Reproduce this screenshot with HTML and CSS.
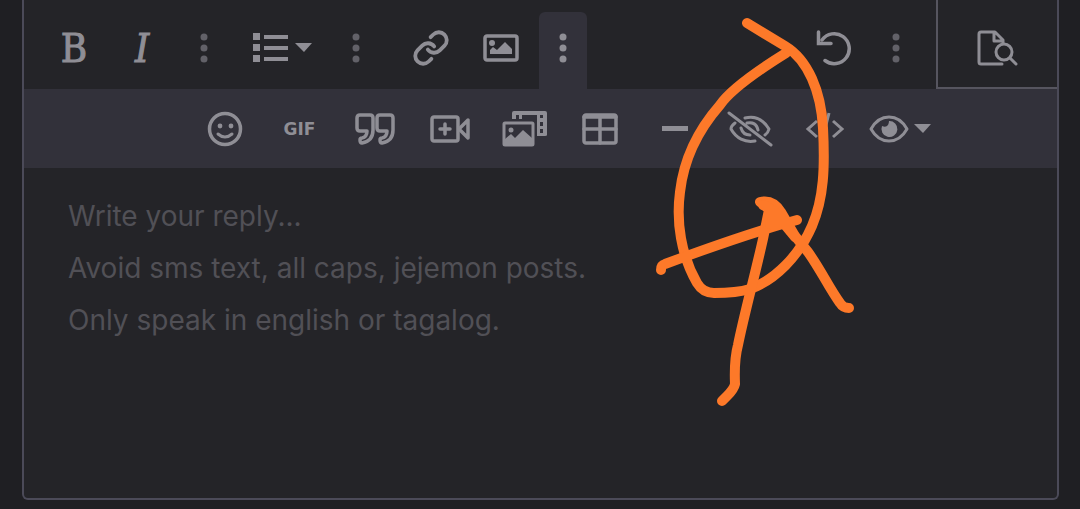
FILE: index.html
```html
<!DOCTYPE html>
<html lang="en">

<head>
    <meta charset="UTF-8">
    <meta name="viewport" content="width=device-width, initial-scale=1.0">
    <title>Write your reply</title>
    <link rel="stylesheet" href="styles.css">
</head>

<body>
    <form class="editor">
        <div class="editor-top">
            <div class="toolbar">
                <button type="button" class="letter" aria-label="Bold">B</button>
                <button type="button" class="letter italic" aria-label="Italic">I</button>
                <button type="button" class="more dim" aria-label="More text options">
                    <svg width="8" height="30"><circle cx="4" cy="4" r="3.5"/><circle cx="4" cy="15" r="3.5"/><circle cx="4" cy="26" r="3.5"/></svg>
                </button>
                <button type="button" class="list" aria-label="List">
                    <svg width="60" height="30" viewBox="0 0 60 30">
                        <path d="M1 0h7v7H1zM1 11h7v7H1zM1 22h7v7H1zM12 2h24v4H12zM12 13h24v4H12zM12 24h24v4H12zM43 10h17l-8 9z"/>
                    </svg>
                </button>
                <button type="button" class="more paragraph dim" aria-label="More paragraph options">
                    <svg width="8" height="30"><circle cx="4" cy="4" r="3.5"/><circle cx="4" cy="15" r="3.5"/><circle cx="4" cy="26" r="3.5"/></svg>
                </button>
                <button type="button" class="insert" aria-label="Insert link">
                    <svg class="line" width="38" height="38" viewBox="0 0 24 24" stroke-width="2.4">
                        <path d="M10 13a5 5 0 0 0 7.54.54l3-3a5 5 0 0 0-7.07-7.07l-1.72 1.71M14 11a5 5 0 0 0-7.54-.54l-3 3a5 5 0 0 0 7.07 7.07l1.71-1.71"/>
                    </svg>
                </button>
                <button type="button" class="insert" aria-label="Insert image">
                    <svg width="36" height="28" viewBox="0 0 36 28">
                        <rect class="line" x="2" y="2" width="32" height="24" rx="2" stroke-width="3.5"/>
                        <circle cx="9" cy="9" r="3"/>
                        <path d="M7 20v-4l3-3 4 3 8-8 7 7v5z"/>
                    </svg>
                </button>
                <button type="button" class="tab" aria-label="More options" aria-expanded="true">
                    <svg width="8" height="30"><circle cx="4" cy="4" r="3.5"/><circle cx="4" cy="15" r="3.5"/><circle cx="4" cy="26" r="3.5"/></svg>
                </button>
                <button type="button" class="undo" aria-label="Undo">
                    <svg class="line" width="36" height="36" viewBox="0 0 36 36" stroke-width="3.5">
                        <path d="M9 30.500A15 15 0 1 0 6 10"/>
                        <path d="M2.500 2v11.500H15" stroke-linejoin="miter"/>
                    </svg>
                </button>
                <button type="button" class="more dim" aria-label="More">
                    <svg width="8" height="30"><circle cx="4" cy="4" r="3.5"/><circle cx="4" cy="15" r="3.5"/><circle cx="4" cy="26" r="3.5"/></svg>
                </button>
            </div>
            <button type="button" class="preview" aria-label="Preview">
                <svg class="line" width="42" height="36" viewBox="0 0 42 36">
                    <path d="M25 34H4q-2 0-2-2V4q0-2 2-2h14l8 8v3M17 2v9h9"/>
                    <circle cx="27" cy="22" r="8"/>
                    <path d="M33 28l6 6"/>
                </svg>
            </button>
        </div>
        <div class="toolbar-more">
            <button type="button" aria-label="Smilies">
                <svg width="36" height="36" viewBox="0 0 36 36">
                    <circle class="line" cx="18" cy="18" r="15.5" stroke-width="3.5"/>
                    <circle cx="13" cy="15" r="2.4"/><circle cx="24" cy="15" r="2.4"/>
                    <path class="line" d="M11 23q7 6 14 0"/>
                </svg>
            </button>
            <button type="button" class="gif">GIF</button>
            <button type="button" aria-label="Quote">
                <svg class="line" width="40" height="34" viewBox="0 0 40 34" stroke-width="3.5">
                    <path d="M5 3h10q3 0 3 3v12q0 11-11 13-2 0-2-3 0-2 2-2 5-1 5-7H5q-3 0-3-3V6q0-3 3-3z"/>
                    <path d="M25 3h10q3 0 3 3v12q0 11-11 13-2 0-2-3 0-2 2-2 5-1 5-7h-7q-3 0-3-3V6q0-3 3-3z"/>
                </svg>
            </button>
            <button type="button" aria-label="Insert video">
                <svg class="line" width="40" height="28" viewBox="0 0 40 28" stroke-width="3.5">
                    <rect x="2" y="2" width="26" height="24" rx="2"/>
                    <path d="M15 9v10M10 14h10M29 14l9-9v18z"/>
                </svg>
            </button>
            <button type="button" aria-label="Media gallery">
                <svg width="46" height="36" viewBox="0 0 46 36">
                    <path d="M10 8V2q0-2 2-2h31q2 0 2 2v22q0 1-2 1h-8V4H20v4h-3V4h-3v4z"/>
                    <path class="holes" d="M38 4h3v3h-3zM38 11h3v4h-3zM38 18h3v4h-3z"/>
                    <rect class="line" x="2" y="12" width="29" height="22" rx="1"/>
                    <circle cx="9" cy="19" r="2.5"/>
                    <path d="M3 34v-6l6-5 4 4 8-8 9 8v7z"/>
                </svg>
            </button>
            <button type="button" aria-label="Insert table">
                <svg class="line" width="36" height="32" viewBox="0 0 36 32" stroke-width="3.5">
                    <rect x="2" y="2" width="32" height="28" rx="2"/>
                    <path d="M2 4h32M2 16h32M18 4v26"/>
                </svg>
            </button>
            <button type="button" aria-label="Insert horizontal line">
                <svg width="26" height="5"><rect width="26" height="5"/></svg>
            </button>
            <button type="button" aria-label="Spoiler">
                <svg class="line" width="46" height="36" viewBox="0 0 46 36">
                    <path d="M2 2l42 32M18 7C29 4 37 10 42 18q-1 4-4 6M8 12q-4 3-4 6c5 9 14 14 24 12M20 12q9-2 11 7M14 17q2 7 9 7"/>
                </svg>
            </button>
            <button type="button" aria-label="Inline code">
                <svg class="line code" width="40" height="36" viewBox="0 0 40 36">
                    <path d="M12 10l-9 8 9 8M28 10l9 8-9 8M24 2l-8 32"/>
                </svg>
            </button>
            <button type="button" class="visibility" aria-label="Toggle view">
                <svg width="62" height="28" viewBox="0 0 62 28">
                    <path class="line" d="M2 14C11-2 29-2 38 14 29 30 11 30 2 14z"/>
                    <path d="M20 6a8 8 0 1 1-7 5q4 2 6-1 1-2 1-4zM45 9h17l-8 9z"/>
                </svg>
            </button>
        </div>
        <textarea class="message" aria-label="Message" placeholder="Write your reply...&#10;Avoid sms text, all caps, jejemon posts.&#10;Only speak in english or tagalog."></textarea>
    </form>

    <!-- freehand marker -->
    <svg class="marker" width="1080" height="509" viewBox="0 0 1080 509" aria-hidden="true">
        <path d="M747 23L785 46C808 60 821 91 823 128C825 167 824 198 812 226C799 256 775 280 750 289Q737 293 714 293Q703 293 697 283C681 255 676 222 680 192C684 157 699 129 720 105Q733 86 786 53"/>
        <path d="M661 270Q661 265 665 264C708 248 749 233 797 220"/>
        <path d="M722 401L727 396Q734 389 735 384Q734 360 738 345C744 315 755 275 763 239L770 205"/>
        <path d="M760 202Q773 199 781 212L795 236L808 252C821 270 829 288 840 303Q843 308 849 308"/>
        <path d="M763 205L774 211L786 224L770 224L776 214L795 237"/>
    </svg>
</body>

</html>
```
FILE: styles.css
```css
* {
    box-sizing: border-box;
}

body {
    margin: 0;
    background: #1f1f23;
    font-family: Inter, sans-serif;
}

.editor {
    display: flex;
    flex-direction: column;
    height: 100vh;
    margin: 0 21px 0 22px;
    border-bottom: 9px solid #1f1f23;
}

.editor-top,
.toolbar-more,
.message {
    border: 0 solid #4b4a58;
    border-left-width: 2px;
    border-right-width: 2px;
}

.editor-top {
    display: flex;
    height: 89px;
    flex-shrink: 0;
    background: #242428;
}

.toolbar {
    display: flex;
    flex: 1;
    padding: 12px 12px 0 16px;
}

button {
    display: flex;
    align-items: center;
    justify-content: center;
    padding: 0;
    border: none;
    background: none;
    color: #8f8e95;
    cursor: pointer;
}

button svg {
    display: block;
    flex-shrink: 0;
    fill: currentColor;
}

.line,
button svg.line {
    fill: none;
    stroke: currentColor;
    stroke-linecap: round;
    stroke-linejoin: round;
}

.line:not([stroke-width]) {
    stroke-width: 3px;
}

.toolbar button {
    width: 68px;
    padding-bottom: 6px;
}

.toolbar .letter {
    font: 40px "DejaVu Serif Condensed", "DejaVu Serif", serif;
    -webkit-text-stroke: 1px;
}

.toolbar .italic {
    font-style: italic;
}

.toolbar .more {
    width: 56px;
}

.toolbar .dim {
    color: #626168;
}

.toolbar .list {
    width: 100px;
}

.toolbar .paragraph {
    width: 48px;
    margin-right: 16px;
}

.toolbar .insert {
    width: 70px;
}

.toolbar .tab {
    width: 48px;
    margin-left: 3px;
    border-radius: 6px 6px 0 0;
    background: #32313a;
}

.toolbar .undo {
    margin-left: auto;
}

.preview {
    width: 121px;
    padding-top: 8px;
    border: solid #56555f;
    border-width: 0 0 2px 2px;
}

.toolbar-more {
    display: flex;
    height: 79px;
    flex-shrink: 0;
    padding-left: 163px;
    background: #32313a;
}

.toolbar-more button {
    width: 75px;
}

.toolbar-more .gif {
    font: bold 17px "DejaVu Sans", sans-serif;
}

.toolbar-more .visibility {
    width: 76px;
}

.toolbar-more .code {
    stroke-linecap: butt;
    stroke-linejoin: miter;
}

button .holes {
    fill: #32313a;
}

.message {
    display: block;
    flex: 1;
    width: 100%;
    padding: 22px 44px;
    border-bottom-width: 2px;
    border-radius: 0 0 6px 6px;
    outline: none;
    resize: none;
    background: #242428;
    color: #8f8e95;
    font: 28px/52px Inter, sans-serif;
}

.message::placeholder {
    color: #515056;
    opacity: 1;
}

.marker {
    position: absolute;
    top: 0;
    left: 0;
    fill: none;
    stroke: #fd7929;
    stroke-width: 10px;
    stroke-linecap: round;
    stroke-linejoin: round;
    pointer-events: none;
}
```
